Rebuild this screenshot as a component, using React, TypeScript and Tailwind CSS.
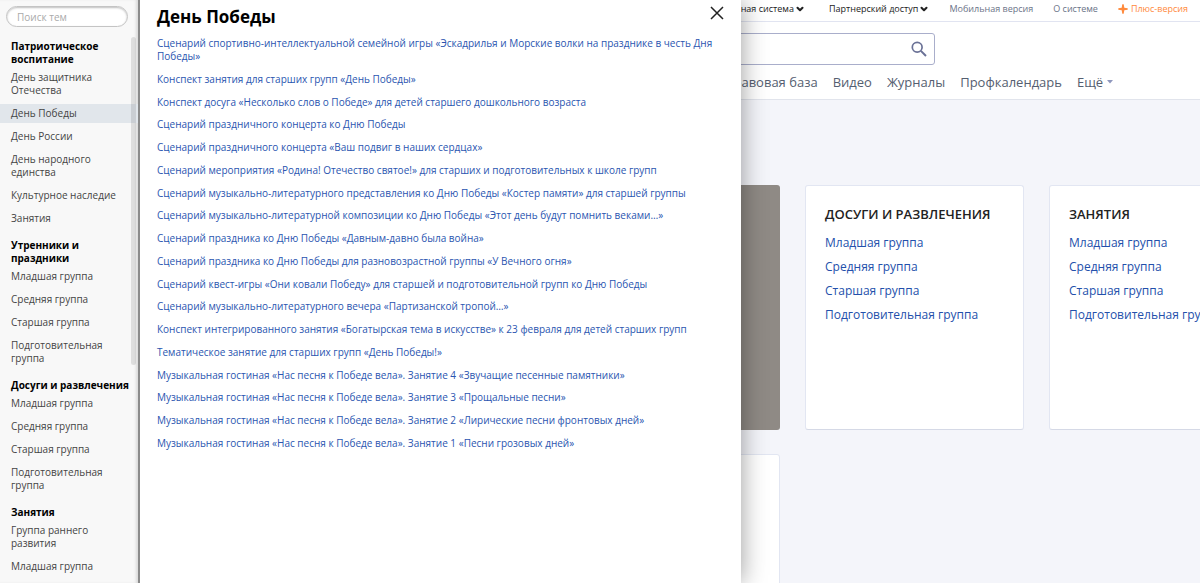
import React from "react";
import { ChevronDown } from "lucide-react";

type Topic = { name: string; active?: boolean };
type Section = { title: string; topics: Topic[] };

const groups: Topic[] = [
  { name: "Младшая группа" },
  { name: "Средняя группа" },
  { name: "Старшая группа" },
  { name: "Подготовительная группа" },
];

const sections: Section[] = [
  {
    title: "Патриотическое воспитание",
    topics: [
      { name: "День защитника Отечества" },
      { name: "День Победы", active: true },
      { name: "День России" },
      { name: "День народного единства" },
      { name: "Культурное наследие" },
      { name: "Занятия" },
    ],
  },
  { title: "Утренники и праздники", topics: groups },
  { title: "Досуги и развлечения", topics: groups },
  { title: "Занятия", topics: [{ name: "Группа раннего развития" }, { name: "Младшая группа" }] },
];

const documents = [
  "Сценарий спортивно-интеллектуальной семейной игры «Эскадрилья и Морские волки на празднике в честь Дня Победы»",
  "Конспект занятия для старших групп «День Победы»",
  "Конспект досуга «Несколько слов о Победе» для детей старшего дошкольного возраста",
  "Сценарий праздничного концерта ко Дню Победы",
  "Сценарий праздничного концерта «Ваш подвиг в наших сердцах»",
  "Сценарий мероприятия «Родина! Отечество святое!» для старших и подготовительных к школе групп",
  "Сценарий музыкально-литературного представления ко Дню Победы «Костер памяти» для старшей группы",
  "Сценарий музыкально-литературной композиции ко Дню Победы «Этот день будут помнить веками…»",
  "Сценарий праздника ко Дню Победы «Давным-давно была война»",
  "Сценарий праздника ко Дню Победы для разновозрастной группы «У Вечного огня»",
  "Сценарий квест-игры «Они ковали Победу» для старшей и подготовительной групп ко Дню Победы",
  "Сценарий музыкально-литературного вечера «Партизанской тропой…»",
  "Конспект интегрированного занятия «Богатырская тема в искусстве» к 23 февраля для детей старших групп",
  "Тематическое занятие для старших групп «День Победы!»",
  "Музыкальная гостиная «Нас песня к Победе вела». Занятие 4 «Звучащие песенные памятники»",
  "Музыкальная гостиная «Нас песня к Победе вела». Занятие 3 «Прощальные песни»",
  "Музыкальная гостиная «Нас песня к Победе вела». Занятие 2 «Лирические песни фронтовых дней»",
  "Музыкальная гостиная «Нас песня к Победе вела». Занятие 1 «Песни грозовых дней»",
];

function TopBar() {
  return (
    <div className="flex h-[22px] items-center justify-end border-b border-[#e1e4f1] pr-3 pb-1 text-[9px] whitespace-nowrap text-[#6b7488]">
      <button type="button" className="mr-6 flex items-center gap-px text-[#222]">
        Образовательная система
        <ChevronDown className="size-[10px]" strokeWidth={5} />
      </button>
      <button type="button" className="mr-5 flex items-center gap-px text-[#222]">
        Партнерский доступ
        <ChevronDown className="size-[10px]" strokeWidth={5} />
      </button>
      <a href="#mobile" className="mr-5">Мобильная версия</a>
      <a href="#about" className="mr-5">О системе</a>
      <a href="#plus" className="flex items-center gap-[3px] text-[#ff8a3d]">
        <svg viewBox="0 0 10 10" className="size-[10px]" fill="currentColor" aria-hidden="true">
          <path d="M4.3 0.3H5.7L6.3 3.7L9.7 4.3V5.7L6.3 6.3L5.7 9.7H4.3L3.7 6.3L0.3 5.7V4.3L3.7 3.7Z" />
        </svg>
        Плюс-версия
      </a>
    </div>
  );
}

function SiteHeader() {
  return (
    <header className="border-b border-[#e1e4ec] bg-white">
      <TopBar />
      <form role="search" className="mt-[11px] ml-[317px] flex h-8 w-[618px] items-center rounded-[3px] border border-[#a9aecb]">
        <input type="search" aria-label="Поиск" className="h-full min-w-0 flex-1 px-3 text-[13px] outline-none" />
        <button type="submit" aria-label="Найти" className="px-[7px] text-[#6a7196]">
          <svg viewBox="0 0 16 16" className="size-4" fill="none" stroke="currentColor" aria-hidden="true">
            <circle cx="6.2" cy="6.2" r="4.9" strokeWidth="1.7" />
            <path d="M9.9 9.9L15 15" strokeWidth="2" />
          </svg>
        </button>
      </form>
      <nav className="flex gap-[15px] pt-2 pb-2 pl-[724px] text-[13px] leading-[18px] whitespace-nowrap text-[#555e70]">
        <a href="#law">Правовая база</a>
        <a href="#video">Видео</a>
        <a href="#journals">Журналы</a>
        <a href="#calendar">Профкалендарь</a>
        <button type="button" className="flex items-center gap-1">
          Ещё
          <svg viewBox="0 0 6 4" className="h-1 w-[6px]" fill="#8f97bd" aria-hidden="true">
            <path d="M0 0H6L3 3.6Z" />
          </svg>
        </button>
      </nav>
    </header>
  );
}

function GroupCard({ title }: { title: string }) {
  return (
    <section className="h-[245px] rounded-[3px] border border-[#e2e6f2] border-b-[#d5d9e6] bg-white px-[19px] pt-[19px]">
      <h2 className="text-[13px] leading-[18px] font-semibold whitespace-nowrap text-[#222]">{title}</h2>
      <ul className="mt-[11px] text-[12px] leading-[18px] whitespace-nowrap text-[#2350ab]">
        {groups.map((g) => (
          <li key={g.name} className="mb-[6px]">
            <a href="#group">{g.name}</a>
          </li>
        ))}
      </ul>
    </section>
  );
}

function Sidebar() {
  return (
    <aside className="flex h-full w-[140px] shrink-0 flex-col border-r-2 border-[#8b8b8b] bg-[#f8f8f8] shadow-[inset_-3px_0_3px_-1px_rgba(0,0,0,0.12)]">
      <div className="pt-[6px] pr-[10px] pl-[6px]">
        <input
          type="text"
          aria-label="Поиск тем"
          placeholder="Поиск тем"
          className="block h-[21px] w-full rounded-full border border-[#c4c4c4] bg-white px-[10px] text-[10px] shadow-[inset_0_1px_2px_rgba(0,0,0,0.25)] outline-none placeholder:text-[#aaa]"
        />
      </div>
      <div className="relative mt-[10px] min-h-0 flex-1">
        <nav className="h-full overflow-hidden pt-[3px] text-[10px] leading-[13px] text-[#444]">
          {sections.map((s) => (
            <section key={s.title} className="mb-[11px]">
              <h2 className="mb-[2px] pl-[11px] font-bold text-black">{s.title}</h2>
              <ul className="flex flex-col gap-1">
                {s.topics.map((t) => (
                  <li key={t.name} className={t.active ? "bg-[#e1e6eb]" : ""}>
                    <a href="#topic" className="block py-[3px] pr-5 pl-[11px]">{t.name}</a>
                  </li>
                ))}
              </ul>
            </section>
          ))}
        </nav>
        <div className="absolute top-0 right-[2px] h-[328px] w-[5px] rounded-full bg-black/10" />
      </div>
    </aside>
  );
}

function TopicPanel() {
  return (
    <section className="h-full min-w-0 flex-1 bg-white pt-[6px] pr-[17px] pl-[17px]">
      <div className="flex items-start justify-between">
        <h1 className="text-[17px] leading-[22px] font-bold text-black">День Победы</h1>
        <button type="button" aria-label="Закрыть" className="text-[#222]">
          <svg viewBox="0 0 14 14" className="size-[14px]" fill="none" stroke="currentColor" strokeWidth="1.5" aria-hidden="true">
            <path d="M1 1L13 13M13 1L1 13" />
          </svg>
        </button>
      </div>
      <ul className="mt-[9px] flex min-h-[413px] flex-col justify-between text-[10px] leading-[13px] text-[#2a55b0]">
        {documents.map((d) => (
          <li key={d}>
            <a href="#document">{d}</a>
          </li>
        ))}
      </ul>
    </section>
  );
}

export default function App() {
  return (
    <div className="h-screen overflow-hidden bg-[#f4f5fa] font-['Open_Sans','Noto_Sans',sans-serif]">
      <SiteHeader />
      <main className="grid grid-cols-[219px_219px_219px] gap-x-[25px] gap-y-6 pt-[85px] pl-[561px]">
        <div className="h-[245px] rounded-[3px] bg-[#8f8a85]" />
        <GroupCard title="ДОСУГИ И РАЗВЛЕЧЕНИЯ" />
        <GroupCard title="ЗАНЯТИЯ" />
        <div className="h-[245px] rounded-[3px] border border-[#e2e6f2] bg-white" />
      </main>
      <div className="fixed inset-y-0 left-0 flex w-[741px] shadow-[0_0_24px_rgba(0,0,0,0.4)]">
        <Sidebar />
        <TopicPanel />
      </div>
    </div>
  );
}
